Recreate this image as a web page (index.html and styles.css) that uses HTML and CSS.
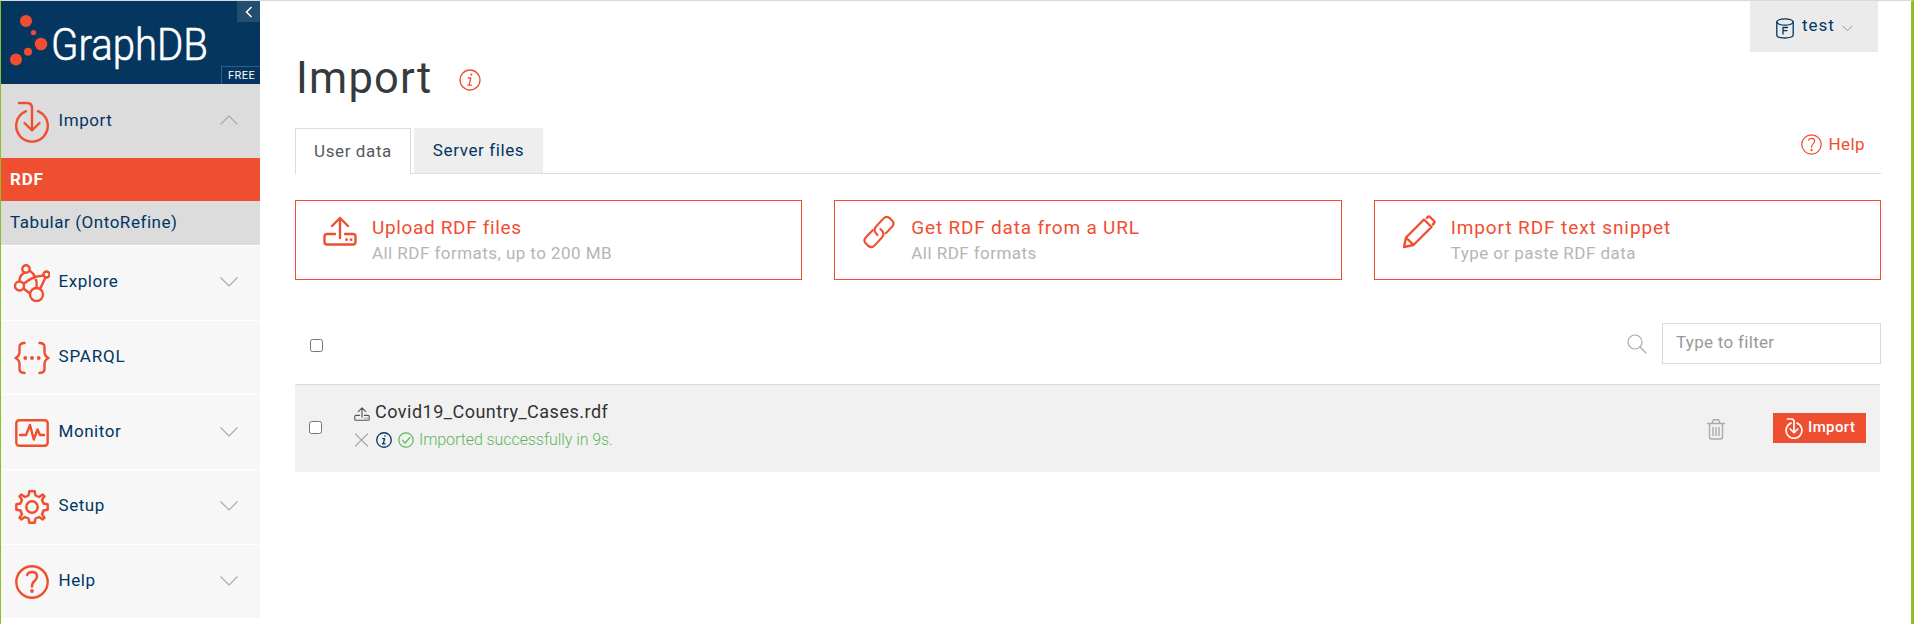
FILE: index.html
```html
<!DOCTYPE html>
<html lang="en">
<head>
<meta charset="utf-8">
<title>GraphDB Import</title>
<link rel="stylesheet" href="styles.css">
</head>
<body>
<svg class="defs" width="0" height="0">
  <symbol id="import" viewBox="0 0 36 42"><path d="M5 2H13Q18 2 18 7V28M10.500 22L18 29.500L25.500 22M12 10.200A15.800 15.800 0 1 0 24 10.200"/></symbol>
  <symbol id="help" viewBox="0 0 34 34"><circle cx="17" cy="17" r="15.700"/><path d="M12.200 10Q13 7 17 7Q22 7 22 11.500Q22 14 19.500 16Q17 18 17 21.500"/><circle class="dot" cx="17" cy="26" r="1.900"/></symbol>
  <symbol id="upload" viewBox="0 0 34 30"><path d="M17 22V2M9 10L17 2L25 10M12 18H4Q1.500 18 1.500 20.500V26Q1.500 28.500 4 28.500H30Q32.500 28.500 32.500 26V20.500Q32.500 18 30 18H22"/><circle class="dot" cx="23.500" cy="23.700" r="1.400"/><circle class="dot" cx="28" cy="23.700" r="1.400"/></symbol>
  <symbol id="info" viewBox="0 0 22 22"><circle cx="11" cy="11" r="10"/><path d="M9.200 9H11.800L10 16.200H12.500M8.800 16.200H10"/><circle class="dot" cx="12.300" cy="5.600" r="1.100"/></symbol>
  <symbol id="chevron" viewBox="0 0 20 12"><path d="M1.500 1.500L10 10L18.500 1.500"/></symbol>
</svg>
<div class="app">
  <aside class="sidebar">
    <header class="brand">
      <svg class="logo" viewBox="0 0 219 83">
        <g class="nodes"><circle cx="25" cy="20" r="6"/><circle cx="32.500" cy="31.500" r="2.600"/><circle cx="40" cy="43" r="6.300"/><circle cx="27" cy="50.800" r="4"/><circle cx="15" cy="58.500" r="6"/></g>
        <text x="50" y="58.500" textLength="157" lengthAdjust="spacingAndGlyphs">GraphDB</text>
      </svg>
      <span class="collapse"><svg viewBox="0 0 8 12"><path d="M6.500 1L1.500 6L6.500 11"/></svg></span>
      <span class="edition">FREE</span>
    </header>
    <nav>
      <a class="item open"><svg class="icon tall"><use href="#import"/></svg><span>Import</span><svg class="chev up"><use href="#chevron"/></svg></a>
      <a class="sub active">RDF</a>
      <a class="sub">Tabular (OntoRefine)</a>
      <a class="item"><svg class="icon explore" viewBox="0 0 36 38"><circle cx="12" cy="5" r="3.700"/><circle cx="32.500" cy="10.500" r="3"/><circle cx="5.500" cy="22" r="4.500"/><circle cx="22.500" cy="30.500" r="6.500"/><path d="M10.500 8.500Q5 12 5.500 17.500M15.500 6.500Q24 12 22.500 24M10 19.500Q18 12.500 29.500 11.500M31.500 13.500L26 25M9.500 24.500L16 29.500"/></svg><span>Explore</span><svg class="chev"><use href="#chevron"/></svg></a>
      <a class="item"><svg class="icon braces" viewBox="0 0 36 34"><path d="M10.500 2Q5.500 2 5.500 6V11Q5.500 15 1.500 17Q5.500 19 5.500 23V28Q5.500 32 10.500 32M25.500 2Q30.500 2 30.500 6V11Q30.500 15 34.500 17Q30.500 19 30.500 23V28Q30.500 32 25.500 32"/><circle class="dot" cx="11.300" cy="17" r="1.900"/><circle class="dot" cx="18" cy="17" r="1.900"/><circle class="dot" cx="24.700" cy="17" r="1.900"/></svg><span class="caps">SPARQL</span></a>
      <a class="item"><svg class="icon" viewBox="0 0 34 34"><rect x="1.300" y="4.300" width="31.400" height="25.400" rx="3"/><path d="M5 19H11L15 9L18.800 23.500L22.500 13.500L25 19H29"/></svg><span>Monitor</span><svg class="chev"><use href="#chevron"/></svg></a>
      <a class="item"><svg class="icon" viewBox="0 0 34 34"><path d="M14.300 1.300H19.700L20.500 5.500L24.200 7L27.700 4.500L29.500 6.300L27 9.800L28.500 13.500L32.700 14.300V19.700L28.500 20.500L27 24.200L29.500 27.700L27.700 29.500L24.200 27L20.500 28.500L19.700 32.700H14.300L13.500 28.500L9.800 27L6.300 29.500L4.500 27.700L7 24.200L5.500 20.500L1.300 19.700V14.300L5.500 13.500L7 9.800L4.500 6.300L6.300 4.500L9.800 7L13.500 5.500Z"/><circle cx="17" cy="17" r="5.700"/></svg><span>Setup</span><svg class="chev"><use href="#chevron"/></svg></a>
      <a class="item"><svg class="icon"><use href="#help"/></svg><span>Help</span><svg class="chev"><use href="#chevron"/></svg></a>
    </nav>
  </aside>
  <main>
    <div class="repo"><svg class="db" viewBox="0 0 18 21"><ellipse cx="9" cy="4" rx="8.200" ry="3.200"/><path d="M.8 4V17C.8 21 17.200 21 17.200 17V4M7 16V9.500H11.500M7 12.600H11"/></svg><span>test</span><svg class="mini"><use href="#chevron"/></svg></div>
    <h1><span>Import</span><svg class="info"><use href="#info"/></svg></h1>
    <div class="tabs">
      <a class="tab current">User data</a><a class="tab">Server files</a>
      <a class="help"><svg><use href="#help"/></svg><span>Help</span></a>
    </div>
    <section class="cards">
      <article class="card"><svg class="up-icon"><use href="#upload"/></svg><div><h2>Upload RDF files</h2><p>All RDF formats, up to 200 MB</p></div></article>
      <article class="card"><svg viewBox="0 0 34 34"><g transform="translate(17 17) rotate(-47) scale(.88) translate(-17 -17)"><path d="M13.500 10.300H2.500Q-2.800 10.300-2.800 15.500V18.500Q-2.800 23.700 2.500 23.700H14Q20.500 23.700 20.500 17.500V16M21.500 23.700H31.500Q36.800 23.700 36.800 18.500V15.500Q36.800 10.300 31.500 10.300H20Q13.500 10.300 13.500 16.500V18"/></g></svg><div><h2 class="url">Get RDF data from a URL</h2><p>All RDF formats</p></div></article>
      <article class="card"><svg viewBox="0 0 34 34"><path d="M2 32L4 22.500L22 4.500L29.500 12L11.500 30ZM4 22.500L11.500 30M25 2.800L26 1.800Q27 1 28 2L32 6Q33 7 32 8L31 9.500"/></svg><div><h2 class="snippet">Import RDF text snippet</h2><p>Type or paste RDF data</p></div></article>
    </section>
    <div class="filter">
      <input type="checkbox" aria-label="Select all">
      <svg viewBox="0 0 20 20"><circle cx="8" cy="8" r="7"/><path d="M13 13L19 19"/></svg>
      <input class="query" type="text" placeholder="Type to filter">
    </div>
    <div class="row">
      <input type="checkbox" aria-label="Select file">
      <div class="file">
        <div class="name"><svg><use href="#upload"/></svg><span>Covid19_Country_Cases.rdf</span></div>
        <div class="status"><svg class="x" viewBox="0 0 15 15"><path d="M1.500 1.500L13.500 13.500M13.500 1.500L1.500 13.500"/></svg><svg class="i"><use href="#info"/></svg><svg class="ok" viewBox="0 0 16 16"><circle cx="8" cy="8" r="7.200"/><path d="M4.300 8.200L7 11L12 5.500"/></svg><span>Imported successfully in 9s.</span></div>
      </div>
      <svg class="trash" viewBox="0 0 18 21"><path d="M.5 4.500H17.500M5 4.500L6 1.500Q6.200 .8 7 .8H11Q11.800 .8 12 1.500L13 4.500M2.500 4.500V17.500Q2.500 20 4.500 20H13.500Q15.500 20 15.500 17.500V4.500M6 8.500V16.500M9 8.500V16.500M12 8.500V16.500"/></svg>
      <button><svg><use href="#import"/></svg><span>Import</span></button>
    </div>
  </main>
</div>
</body>
</html>
```
FILE: styles.css
```css
* { box-sizing: border-box; }
body { margin: 0; background: #fff; color: #333; font: 17px/24px Roboto, "Open Sans", sans-serif; }
svg { display: block; flex: none; fill: none; stroke: currentColor; stroke-width: 2.4; stroke-linecap: round; stroke-linejoin: round; }
.dot { fill: currentColor; stroke: none; }
.defs { position: absolute; }
h1, h2, p { margin: 0; font-weight: 400; }
.app { display: flex; height: 624px; border-top: 1px solid #d9d9dc; border-left: 1px solid #8cbf26; border-right: 3px solid #8cbf26; overflow: hidden; }
.sidebar { width: 259px; flex: none; color: #003663; }
.brand { position: relative; height: 83px; background: #04365f; color: #fff; }
.logo { width: 219px; height: 83px; overflow: visible; }
.nodes { fill: #f04e30; stroke: none; }
.logo text { font: 300 45px Roboto, sans-serif; fill: #fff; stroke: #fff; stroke-width: .6; }
.collapse { position: absolute; top: 0; right: 0; width: 23px; height: 21px; background: #244e70; display: grid; place-items: center; }
.collapse svg { width: 8px; height: 12px; stroke-width: 1.5; stroke-linecap: butt; stroke-linejoin: miter; }
.edition { position: absolute; right: 0; bottom: 0; width: 39px; height: 18px; border: 1px solid #365e7e; border-width: 1px 0 0 1px; padding-left: 6px; font-size: 11px; line-height: 17px; letter-spacing: .45px; }
.item { display: flex; align-items: center; height: 74.700px; padding: 0 21px 0 14px; border-top: 1px solid #fff; background: #f7f7f7; letter-spacing: .55px; }
.item.open { height: 74px; border: 0; background: #dcdcdc; }
.icon { width: 34px; height: 34px; margin-right: 9.500px; margin-top: 1px; color: #f04e30; }
.icon.tall { width: 36px; height: 42px; margin: 2px 8.500px 0 -1px; }
.icon.explore { width: 36px; height: 38px; margin-left: -1px; margin-right: 8.500px; }
.icon.braces { width: 36px; margin-left: -1px; margin-right: 8.500px; margin-top: 0; }
.item span { padding-bottom: 3px; }
.item .caps { letter-spacing: .8px; }
.chev { width: 20px; height: 12px; margin-left: auto; margin-bottom: 1px; color: #aaa; stroke-width: 1.1; stroke-linecap: butt; }
.up { transform: rotate(180deg); margin-bottom: 3px; }
.sub { display: block; height: 44px; padding-left: 9px; background: #dcdcdc; line-height: 43px; letter-spacing: .55px; }
.sub.active { height: 43px; background: #f04e30; color: #fff; font-weight: 700; letter-spacing: .8px; }
main { position: relative; flex: 1; padding: 0 30px 0 35px; }
.repo { position: absolute; top: 0; right: 33px; width: 128px; height: 51px; padding: 0 26px; background: #ebebeb; color: #003663; display: flex; align-items: center; }
.repo span { margin: -3px 7px 0 8px; letter-spacing: 1px; }
.repo .db { width: 18px; height: 21px; margin-top: 4px; stroke-width: 1.3; }
.mini { width: 11px; height: 7px; margin-top: 4px; color: #999; stroke-width: 1.8; }
h1 { display: flex; align-items: center; height: 127px; font-size: 43.500px; color: #373a3c; letter-spacing: 1.2px; }
.info { width: 22px; height: 22px; margin: 30px 0 0 27px; color: #f04e30; stroke-width: 1.3; }
h1 span { padding-top: 28px; margin-left: 1px; }
.tabs { display: flex; height: 46px; border-bottom: 1px solid #dcdcdf; color: #003663; }
.tab { width: 129px; height: 45px; background: #eee; text-align: center; line-height: 45px; letter-spacing: .6px; font-size: 17px; }
.tab.current { width: 116px; height: 46px; margin-right: 3px; border: 1px solid #dcdcdf; border-bottom: 0; background: #fff; color: #55595c; line-height: 44px; }
.help { display: flex; margin: 6px 16px 0 auto; color: #f04e30; letter-spacing: .4px; }
.help svg { width: 21px; height: 21px; margin-right: 7px; stroke-width: 2; }
.help span { margin-top: -2px; }
.cards { display: grid; grid-template-columns: repeat(3, 1fr); gap: 32px; margin-top: 26px; }
.card { display: flex; height: 80px; padding: 14px 0 0 27px; border: 1px solid #f04e30; color: #f04e30; }
.card > svg { width: 34px; height: 34px; margin-right: 15px; }
.card .up-icon { height: 30px; margin-top: 1px; }
h2 { font-size: 19px; line-height: 26px; letter-spacing: .65px; }
h2.url { letter-spacing: .8px; }
h2.snippet { letter-spacing: .9px; }
.card p { color: #b5b5b5; font-size: 17px; line-height: 24px; letter-spacing: .45px; }
.filter { display: flex; align-items: center; height: 41px; margin-top: 43px; }
input[type="checkbox"] { width: 13px; height: 13px; margin: 3px 0 0 15px; }
.filter > svg { width: 20px; height: 20px; margin: 0 15px 0 auto; color: #aaa; stroke-width: 1.2; }
.query { width: 219px; height: 41px; border: 1px solid #d9d9d9; padding: 0 13px 3px; font: 400 17px Roboto, sans-serif; letter-spacing: .3px; }
.query::placeholder { color: #999; }
.row { display: flex; align-items: flex-start; height: 88px; margin-top: 20px; margin-right: 1px; border-top: 1px solid #d9dadb; background: #f1f1f1; }
.row > input[type="checkbox"] { margin: 36px 31px 0 14px; }
.file { flex: 1; padding-top: 15px; }
.name { display: flex; height: 27px; font-size: 18px; letter-spacing: .5px; }
.name svg { width: 16px; height: 14px; margin: 7px 5px 0 1px; color: #555; }
.status { display: flex; align-items: center; height: 25px; font-size: 16px; font-weight: 300; color: #5cb85c; letter-spacing: -.08px; }
.status svg { width: 16px; height: 16px; margin-right: 6px; stroke-width: 1.2; }
.status .x { color: #aaa; width: 15px; margin-left: 1px; margin-right: 7px; }
.status .i { color: #003663; stroke-width: 1.8; }
.status .ok { margin-right: 5px; }
.trash { width: 18px; height: 21px; margin: 34px 48px 0 0; color: #aaa; stroke-width: 1.4; }
button { display: flex; width: 93px; height: 30px; margin: 28px 14px 0 0; padding: 5px 0 0 12px; border: 0; background: #f04e30; color: #fff; font: 500 15px/19px Roboto, sans-serif; letter-spacing: .4px; }
button svg { width: 18px; height: 21px; margin-right: 5px; stroke-width: 3.4; }
```
